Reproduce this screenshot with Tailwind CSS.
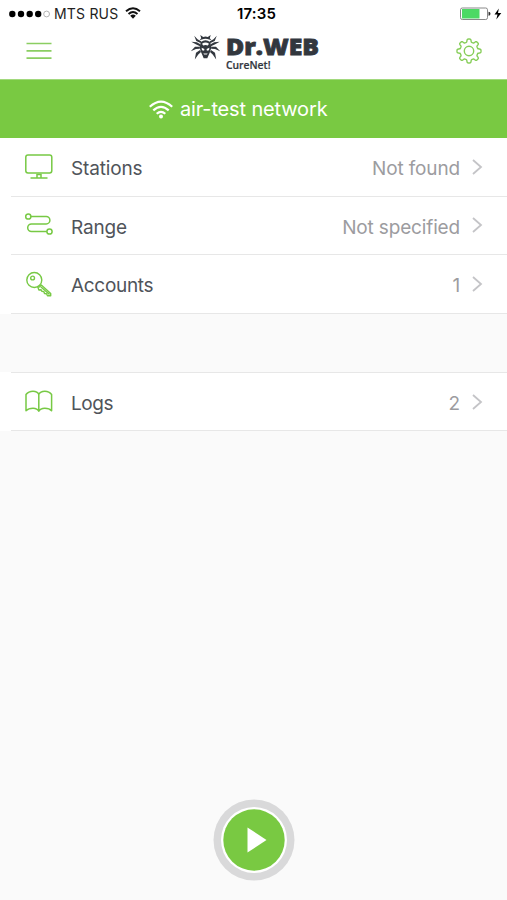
<!DOCTYPE html>
<html lang="en">
<head>
<meta charset="utf-8">
<title>Dr.Web CureNet!</title>
<script src="https://cdn.jsdelivr.net/npm/@tailwindcss/browser@4"></script>
</head>
<body class="w-[507px] h-[900px] overflow-hidden bg-[#fafafa] font-['Inter','Liberation_Sans',sans-serif] text-[#50545a] flex flex-col">
<div class="h-[27px] shrink-0 bg-white grid grid-cols-3 items-center text-black">
  <div class="flex items-center pl-[9px]">
    <svg class="w-[41px] h-[8px]" viewBox="0 0 41 8"><g fill="#000"><circle cx="3.3" cy="4" r="3.2"/><circle cx="12" cy="4" r="3.2"/><circle cx="20.7" cy="4" r="3.2"/><circle cx="29.2" cy="4" r="3.2"/></g><circle cx="37.6" cy="4" r="2.9" fill="none" stroke="#aaa" stroke-width=".9"/></svg>
    <span class="ml-[4px] w-[66px] text-[14px] tracking-[0.2px] whitespace-nowrap text-[#222]">MTS RUS</span>
    <svg class="ml-[5px] mb-[2px] w-[16px] h-[12px]" viewBox="0 0 24 18" fill="none" stroke="#111" stroke-width="2.9"><path d="M1.5 6.5Q12-2.7 22.500 6.500M5.300 10.500Q12 4.300 18.700 10.500"/><path d="M7.800 13Q12 9.300 16.200 13L12 17.500z" fill="#111" stroke="none"/></svg>
  </div>
  <div class="text-center text-[15px] font-semibold tracking-[0.2px] pl-[6px] pt-[2px]">17:35</div>
  <div class="flex items-center justify-end pr-[5px]">
    <svg class="w-[42px] h-[14px]" viewBox="0 0 42 14"><rect x=".5" y="1" width="27" height="11.500" rx="1.800" fill="#fff" stroke="#888"/><path d="M2 2h17.500v9.500H2z" fill="#4cd964"/><path d="M28.500 4.800q2 .2 2 2t-2 2z" fill="#333"/><path d="M38.800 1.500L34.500 7.600h3l-1.200 4.900 5-6.500h-3.300z"/></svg>
  </div>
</div>
<header class="h-[52px] shrink-0 bg-white flex justify-between pl-[26px] pr-[25px]">
  <svg class="w-[26px] h-[20px] mt-[14px]" viewBox="0 0 26 20" stroke="#8bce62" stroke-width="1.700"><path d="M.5 2.500h25M.5 9.800h25M.5 17.100h25"/></svg>
  <svg class="w-[132px] h-[44px] ml-[4px] mt-[4px]" viewBox="190 31 132 44" fill="#32373e">
    <g id="legs">
      <path d="M200.600 43L196.300 41 194.200 35.800 197.500 39.300 201.500 41.500z"/>
      <path d="M200 46.300L195.800 44.300 191.300 41.800 196.800 42.200 200.300 44.300z"/>
      <path d="M199.800 48.800L196 48.900 190.800 51.200 195 46.700 199.800 46.800z"/>
      <path d="M200 50L201 52 198.300 54.500 194.800 59.500 196 52.800z"/>
    </g>
    <use href="#legs" transform="matrix(-1 0 0 1 411 0)"/>
    <path d="M201.200 38.200l-.9-3.200 2.900 1.900q2.300-.7 4.600 0l2.900-1.900-.9 3.200 1.700 2-2.300-.8q-3.700-1.500-7.400 0l-2.300.8z"/>
    <path d="M200.700 42.200q4.800-3.700 9.600 0l1.100 5.300-1.600 5-2.500 5.700h-3.600l-2.500-5.700-1.600-5z"/>
    <path d="M202 43.800q3.500-2.600 7 0l-1.200 1.700-2.300-.6-2.300.6zM201.600 47.800l2.800 1.300-.3 1.700-2.100-.6zM209.400 47.800l-2.800 1.300.3 1.700 2.100-.6zM203.300 53.600h4.400l-.8 1h-2.800z" fill="#fff"/>
    <text x="226" y="55.300" font-family="Open Sans, sans-serif" font-size="22.500" font-weight="800" stroke="#32373e" stroke-width=".8" textLength="93" lengthAdjust="spacingAndGlyphs">Dr.WEB</text>
    <text x="226" y="69" font-family="Open Sans, sans-serif" font-size="10" font-weight="600" stroke="#32373e" stroke-width=".2" textLength="44.500" lengthAdjust="spacingAndGlyphs">CureNet!</text>
  </svg>
  <svg class="w-[26px] h-[26px] mt-[11px]" viewBox="-13 -13 26 26" fill="none" stroke="#86cd58" stroke-width="1.400" stroke-linejoin="round"><circle r="4.700"/><path id="gear"/></svg>
</header>
<div class="h-[59px] shrink-0 bg-[#79c942] border-t border-[#a2d97d] flex items-center pl-[149px] text-white">
  <svg class="w-[24px] h-[19px]" viewBox="0 0 24 19" fill="none" stroke="#fff" stroke-width="2.200"><path d="M.8 6.800Q12-3.600 23.200 6.800M4.300 10.400Q12 3.400 19.700 10.400M7.700 13.700Q12 9.900 16.300 13.700"/><circle cx="12" cy="16.500" r="2" fill="#fff" stroke="none"/></svg>
  <span class="ml-[7px] text-[20px] tracking-[-0.15px] whitespace-nowrap">air-test network</span>
</div>
<main class="text-[19px] tracking-[-0.15px] flex flex-col">
  <div class="h-[59px] bg-white pl-[11px]"><div class="h-full border-b border-[#e7e7e7] flex items-center pl-[14px] pr-[24px]">
    <svg class="w-[28px] h-[26px]" viewBox="0 0 28 26" fill="none" stroke="#77c944" stroke-width="1.500"><rect x=".8" y="1" width="26" height="18" rx="2.200"/><path d="M12 24v-3.500h4V24M5.500 24h17"/></svg>
    <span class="ml-[18px] pt-[5px]">Stations</span><span class="ml-auto pt-[5px] text-[#9c9c9f]">Not found</span>
    <svg class="ml-[12px] w-[11px] h-[16px]" viewBox="0 0 11 16" fill="none" stroke="#c4c4c7" stroke-width="1.800"><path d="M1 1l8 7-8 7"/></svg></div></div>
  <div class="h-[58px] bg-white pl-[11px]"><div class="h-full border-b border-[#e7e7e7] flex items-center pl-[14px] pr-[24px]">
    <svg class="w-[28px] h-[26px] mb-[2px]" viewBox="0 0 28 26" fill="none" stroke="#77c944" stroke-width="1.500"><circle cx="3.300" cy="4.500" r="2.600"/><circle cx="24.500" cy="19.500" r="2.600"/><path d="M6 4.500h15.200a3.700 3.700 0 0 1 0 7.400H6.500a3.800 3.800 0 0 0 0 7.600h15.400"/></svg>
    <span class="ml-[18px] pt-[5px]">Range</span><span class="ml-auto pt-[5px] text-[#9c9c9f]">Not specified</span>
    <svg class="ml-[12px] mb-[1px] w-[11px] h-[16px]" viewBox="0 0 11 16" fill="none" stroke="#c4c4c7" stroke-width="1.800"><path d="M1 1l8 7-8 7"/></svg></div></div>
  <div class="h-[59px] bg-white pl-[11px]"><div class="h-full border-b border-[#e7e7e7] flex items-center pl-[14px] pr-[24px]">
    <svg class="w-[28px] h-[26px]" viewBox="0 0 28 26" fill="none" stroke="#77c944" stroke-width="1.400" stroke-linejoin="round"><circle cx="9.300" cy="9" r="7.500"/><circle cx="7.600" cy="7" r="1.900"/><path d="M12.800 16l2-.3 1.500-1.700 9.400 8.500v2.300h-3.200l-1-2-2-.2-.7-2-2-.3-.7-1.600-2.200.3zM16 16l8.500 7.500"/></svg>
    <span class="ml-[18px] pt-[4px] tracking-[-0.3px]">Accounts</span><span class="ml-auto pt-[4px] text-[#9c9c9f]">1</span>
    <svg class="ml-[12px] w-[11px] h-[16px]" viewBox="0 0 11 16" fill="none" stroke="#c4c4c7" stroke-width="1.800"><path d="M1 1l8 7-8 7"/></svg></div></div>
  <div class="mt-[58px] h-[59px] bg-white pl-[11px]"><div class="h-full border-y border-[#e7e7e7] flex items-center pl-[14px] pr-[24px]">
    <svg class="w-[28px] h-[26px]" viewBox="0 0 28 26" fill="none" stroke="#77c944" stroke-width="1.500" stroke-linejoin="round"><path d="M13.800 5.500Q12.500 2.200 8 2.200T1 5.500V21.800Q3.500 19.200 8 19.200T13.800 22.300Q15.200 19.200 19.800 19.200T26.600 21.800V5.500Q24.300 2.200 19.800 2.200T13.800 5.500V22"/></svg>
    <span class="ml-[18px] pt-[5px] tracking-[-0.4px]">Logs</span><span class="ml-auto pt-[5px] text-[#9c9c9f]">2</span>
    <svg class="ml-[12px] w-[11px] h-[16px]" viewBox="0 0 11 16" fill="none" stroke="#c4c4c7" stroke-width="1.800"><path d="M1 1l8 7-8 7"/></svg></div></div>
</main>
<button class="mt-auto mb-[19px] self-center size-[82px] shrink-0" aria-label="Start scan">
  <svg class="size-[82px]" viewBox="0 0 82 82"><circle cx="41" cy="41" r="40.500" fill="#d9d9da"/><circle cx="41" cy="41" r="33" fill="#fff"/><circle cx="41" cy="41" r="30.700" fill="#79c942"/><path d="M34.500 28.500v25L53.500 41z" fill="#fff"/></svg>
</button>
<script>
// Eight-lobed outline of the settings gear.
let d = '';
for (let i = 0; i <= 160; i++) {
  const a = i * Math.PI / 80, w = Math.cos(8 * a);
  const r = 10.500 + 1.500 * Math.tanh(2.5 * w) / Math.tanh(2.5);
  d += (i ? 'L' : 'M') + (r * Math.cos(a)).toFixed(2) + ' ' + (r * Math.sin(a)).toFixed(2);
}
document.getElementById('gear').setAttribute('d', d + 'Z');
</script>
</body>
</html>
